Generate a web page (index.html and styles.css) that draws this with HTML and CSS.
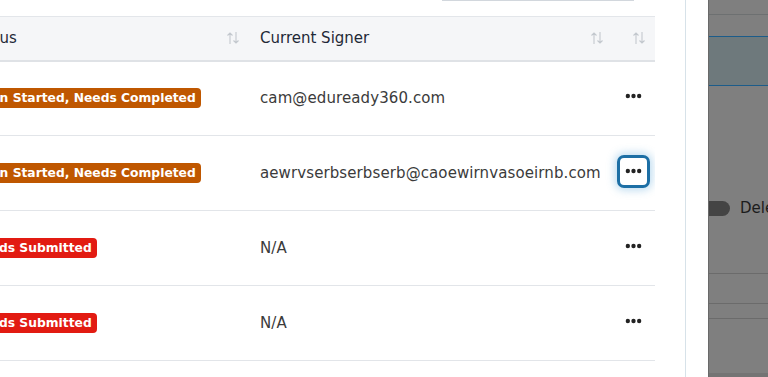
FILE: index.html
```html
<!DOCTYPE html>
<html lang="en">
<head>
    <meta charset="UTF-8">
    <meta name="viewport" content="width=device-width, initial-scale=1.0">
    <title>Signatures</title>
    <link rel="stylesheet" href="styles.css">
</head>
<body>
    <div class="page">
        <div class="main">
            <div class="toolbar">
                <div class="search"></div>
            </div>
            <div class="table-wrap">
                <table class="grid">
                    <colgroup>
                        <col class="col-status">
                        <col class="col-signer">
                        <col class="col-actions">
                    </colgroup>
                    <thead>
                        <tr>
                            <th class="th-status">
                                <div class="th-inner"><span>Status</span><svg class="sort" viewBox="0 0 14 14"><path d="M4 13V2M1.5 4.5L4 2l2.5 2.5M10 1v11M7.5 9.5L10 12l2.5-2.5"/></svg></div>
                            </th>
                            <th>
                                <div class="th-inner"><span>Current Signer</span><svg class="sort" viewBox="0 0 14 14"><path d="M4 13V2M1.5 4.5L4 2l2.5 2.5M10 1v11M7.5 9.5L10 12l2.5-2.5"/></svg></div>
                            </th>
                            <th class="th-actions">
                                <div class="th-inner end"><svg class="sort" viewBox="0 0 14 14"><path d="M4 13V2M1.5 4.5L4 2l2.5 2.5M10 1v11M7.5 9.5L10 12l2.5-2.5"/></svg></div>
                            </th>
                        </tr>
                    </thead>
                    <tbody>
                        <tr>
                            <td><span class="badge orange">Open Started, Needs Completed</span></td>
                            <td class="signer">cam@eduready360.com</td>
                            <td class="actions"><button class="more"><svg viewBox="0 0 18 6"><circle cx="3" cy="3" r="2.3"/><circle cx="9" cy="3" r="2.3"/><circle cx="15" cy="3" r="2.3"/></svg></button></td>
                        </tr>
                        <tr>
                            <td><span class="badge orange">Open Started, Needs Completed</span></td>
                            <td class="signer">aewrvserbserbserb@caoewirnvasoeirnb.com</td>
                            <td class="actions"><button class="more focused"><svg viewBox="0 0 18 6"><circle cx="3" cy="3" r="2.3"/><circle cx="9" cy="3" r="2.3"/><circle cx="15" cy="3" r="2.3"/></svg></button></td>
                        </tr>
                        <tr>
                            <td><span class="badge red">Needs Submitted</span></td>
                            <td class="signer">N/A</td>
                            <td class="actions"><button class="more"><svg viewBox="0 0 18 6"><circle cx="3" cy="3" r="2.3"/><circle cx="9" cy="3" r="2.3"/><circle cx="15" cy="3" r="2.3"/></svg></button></td>
                        </tr>
                        <tr>
                            <td><span class="badge red">Needs Submitted</span></td>
                            <td class="signer">N/A</td>
                            <td class="actions"><button class="more"><svg viewBox="0 0 18 6"><circle cx="3" cy="3" r="2.3"/><circle cx="9" cy="3" r="2.3"/><circle cx="15" cy="3" r="2.3"/></svg></button></td>
                        </tr>
                    </tbody>
                </table>
            </div>
        </div>
        <div class="spacer"></div>
        <div class="side">
            <div class="side-top"></div>
            <div class="side-tab"></div>
            <div class="side-body">
                <div class="toggle-row">
                    <span class="toggle"></span>
                    <span class="toggle-label">Delete</span>
                </div>
            </div>
            <div class="side-rows">
                <div class="side-row one"></div>
                <div class="side-row two"></div>
            </div>
            <div class="side-foot"></div>
        </div>
    </div>
</body>
</html>
```

FILE: styles.css
```css
body {
    margin: 0;
    font-family: "DejaVu Sans", "Noto Sans", sans-serif;
    background: white;
    overflow: hidden;
}
.page {
    display: flex;
    width: 768px;
    height: 377px;
}
.main {
    flex: none;
    width: 685px;
    border-right: 1px solid #d7e2e9;
    overflow: hidden;
}
.toolbar {
    height: 16px;
    display: flex;
}
.search {
    width: 192px;
    height: 0;
    margin-left: 442px;
    border-bottom: 1.5px solid #d2d7dd;
}
.table-wrap {
    width: 655px;
    overflow: hidden;
}
.grid {
    border-collapse: collapse;
    table-layout: fixed;
    margin-left: -47px;
    width: 702px;
}
.col-status {
    width: 295px;
}
.col-signer {
    width: 364px;
}
.col-actions {
    width: 43px;
}
th, td {
    box-sizing: border-box;
}
th {
    background-color: #f5f6f8;
    border-top: 1px solid #e3e6ea;
    border-bottom: 2px solid #dfe2e6;
    height: 44px;
    padding: 0 8px 0 12px;
    text-align: left;
    font-weight: 500;
    font-size: 15px;
    color: #1f2937;
}
.th-status {
    padding-left: 16px;
}
.th-actions {
    padding-right: 9px;
}
.th-inner {
    display: flex;
    justify-content: space-between;
    align-items: center;
}
.th-inner.end {
    justify-content: flex-end;
}
.sort {
    width: 14px;
    height: 14px;
    fill: none;
    stroke: #c3c8ce;
    stroke-width: 1.1;
}
td {
    height: 75px;
    padding: 0 12px;
    border-bottom: 1px solid #e2e5e9;
    font-size: 15px;
    letter-spacing: 0.1px;
    color: #3b3b3b;
}
.badge {
    display: inline-block;
    margin-left: 2px;
    padding: 1px 5px;
    border-radius: 4px;
    color: white;
    font-weight: 700;
    font-size: 12.3px;
    letter-spacing: 0;
    line-height: 18px;
}
.badge.orange {
    background-color: #bf5700;
}
.badge.red {
    background-color: #e21b12;
}
td.actions {
    padding: 0;
    text-align: center;
}
.more {
    width: 33px;
    height: 33px;
    border: 3px solid transparent;
    border-radius: 7px;
    background: white;
    padding: 0;
    display: inline-flex;
    align-items: center;
    justify-content: center;
    margin-top: -4px;
}
.more svg {
    width: 17px;
    height: 6px;
    fill: #232323;
}
.more.focused {
    border-color: #1d6fa5;
    box-shadow: 0 0 8px 2px rgba(60, 150, 210, 0.35);
}
.spacer {
    flex: none;
    width: 22px;
}
.side {
    flex: 1;
    background-color: #7f7f7f;
    border-left: 1px solid #696969;
    display: flex;
    flex-direction: column;
    overflow: hidden;
}
.side-top {
    height: 14px;
    border-bottom: 1px solid #6d7071;
}
.side-tab {
    margin-top: 21px;
    height: 48px;
    background-color: #6e797c;
    border-top: 1px solid #1c5c8a;
    border-bottom: 1px solid #1c5c8a;
}
.side-body {
    height: 187px;
}
.toggle-row {
    display: flex;
    align-items: center;
    gap: 10px;
    margin-top: 113px;
    margin-left: -9px;
}
.toggle {
    flex: none;
    width: 30px;
    height: 15px;
    border-radius: 8px;
    background-color: #444;
}
.toggle-label {
    font-size: 15px;
    color: #1c1c1c;
    white-space: nowrap;
}
.side-rows {
    height: 45px;
}
.side-row.one {
    height: 29px;
    border-top: 1px solid #6b6b6b;
}
.side-row.two {
    height: 14px;
    border-top: 1px solid #6b6b6b;
    border-bottom: 1px solid #6b6b6b;
}
.side-foot {
    flex: 1;
    margin-top: 55px;
    background-color: #747474;
}
```
